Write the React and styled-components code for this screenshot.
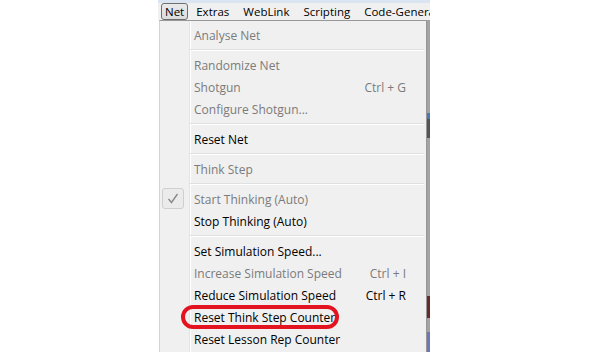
import React from "react";
import styled, { createGlobalStyle, css } from "styled-components";

const Global = createGlobalStyle`
  html, body { margin: 0; padding: 0; background: #ffffff; }
  body { font-family: "Open Sans", "Noto Sans", sans-serif; }
`;

const Page = styled.div`
  width: 591px;
  height: 352px;
  overflow: hidden;
  background: #fff;
  display: flex;
  padding-left: 158px;
  box-sizing: border-box;
`;

const Window = styled.div`
  width: 272px;
  display: flex;
  flex-direction: column;
`;

const MenuBar = styled.div`
  height: 20px;
  display: flex;
  align-items: center;
  padding-left: 3px;
  background: linear-gradient(to bottom, #dbe5f2 0, #dbe5f2 3px, #f0f0f0 3px, #f0f0f0 100%);
  font-size: 11.5px;
  color: #000;
  overflow: hidden;
  white-space: nowrap;
`;

const BarItem = styled.div`
  height: 17px;
  margin-top: 3px;
  box-sizing: border-box;
  display: flex;
  align-items: center;
  flex-shrink: 0;
  padding: 0 ${(p) => (p.$active ? "3px" : "6px")};
  margin-right: ${(p) => (p.$active ? "1px" : "0")};
  border: 1px solid ${(p) => (p.$active ? "#6f6f6f" : "transparent")};
  border-radius: 3px;
  background: ${(p) => (p.$active ? "linear-gradient(#eaeaea, #dcdcdc)" : "transparent")};
`;

const MenuRow = styled.div`
  display: flex;
  flex: 1;
  padding-left: 1px;
`;

const Menu = styled.div`
  width: 268px;
  box-sizing: border-box;
  border: 1px solid #979797;
  border-left-color: #d4d4d4;
  border-bottom: none;
  padding: 3px 2px 0 0;
  background: linear-gradient(
    to right,
    #f0f0f0 0,
    #f0f0f0 29px,
    #e2e3e3 29px,
    #e2e3e3 30px,
    #ffffff 30px,
    #ffffff 31px,
    #f0f0f0 31px
  );
  font-size: 12px;
  display: flex;
  flex-direction: column;
`;

const Edge = styled.div`
  width: 3px;
  background: linear-gradient(
    to bottom,
    #a3a3a3 0,
    #a3a3a3 93px,
    #4a7ab0 93px,
    #4a7ab0 99px,
    #555555 99px,
    #555555 118px,
    #a3a3a3 118px,
    #a3a3a3 276px,
    #6a2a2a 276px,
    #6a2a2a 298px,
    #a3a3a3 298px,
    #a3a3a3 312px,
    #6a78b8 312px,
    #6a78b8 100%
  );
`;

const Item = styled.div`
  position: relative;
  height: 22px;
  display: flex;
  align-items: center;
  padding-left: 34px;
  padding-right: 18px;
  color: ${(p) => (p.$disabled ? "#7b7b7b" : "#000")};
  white-space: nowrap;
  ${(p) =>
    p.$circled &&
    css`
      &::after {
        content: "";
        position: absolute;
        left: 21px;
        top: -1px;
        width: 158px;
        height: 24px;
        box-sizing: border-box;
        border: 4px solid #e3141f;
        border-radius: 12px;
      }
    `}
`;

const Label = styled.span`
  flex: 1;
`;

const Shortcut = styled.span`
  text-align: right;
`;

const Separator = styled.div`
  height: 2px;
  margin: 3px 0 3px 30px;
  background: linear-gradient(#e0e0e0 0, #e0e0e0 1px, #ffffff 1px);
`;

const CheckBox = styled.div`
  position: absolute;
  left: 2px;
  top: 0;
  width: 22px;
  height: 21px;
  box-sizing: border-box;
  border: 1px solid #cfcfcf;
  border-radius: 3px;
  background: #ebebeb;
  display: flex;
  align-items: center;
  justify-content: center;
`;

const items = [
  { label: "Analyse Net", disabled: true },
  "sep",
  { label: "Randomize Net", disabled: true },
  { label: "Shotgun", disabled: true, shortcut: "Ctrl + G" },
  { label: "Configure Shotgun...", disabled: true },
  "sep",
  { label: "Reset Net" },
  "sep",
  { label: "Think Step", disabled: true },
  "sep",
  { label: "Start Thinking (Auto)", disabled: true, checked: true },
  { label: "Stop Thinking (Auto)" },
  "sep",
  { label: "Set Simulation Speed..." },
  { label: "Increase Simulation Speed", disabled: true, shortcut: "Ctrl + I" },
  { label: "Reduce Simulation Speed", shortcut: "Ctrl + R" },
  { label: "Reset Think Step Counter", circled: true },
  { label: "Reset Lesson Rep Counter" },
];

export default function App() {
  return (
    <>
      <Global />
      <Page>
        <Window>
          <MenuBar>
            <BarItem $active>Net</BarItem>
            <BarItem>Extras</BarItem>
            <BarItem>WebLink</BarItem>
            <BarItem>Scripting</BarItem>
            <BarItem>Code-Generation</BarItem>
          </MenuBar>
          <MenuRow>
            <Menu>
              {items.map((it, i) =>
                it === "sep" ? (
                  <Separator key={i} />
                ) : (
                  <Item key={i} $disabled={it.disabled} $circled={it.circled}>
                    {it.checked && (
                      <CheckBox>
                        <svg width="12" height="11" viewBox="0 0 12 11">
                          <path d="M1.5 6 L4.5 9.5 L10.5 1" fill="none" stroke="#8a8a8a" strokeWidth="1.4" />
                        </svg>
                      </CheckBox>
                    )}
                    <Label>{it.label}</Label>
                    {it.shortcut && <Shortcut>{it.shortcut}</Shortcut>}
                  </Item>
                )
              )}
            </Menu>
            <Edge />
          </MenuRow>
        </Window>
      </Page>
    </>
  );
}
